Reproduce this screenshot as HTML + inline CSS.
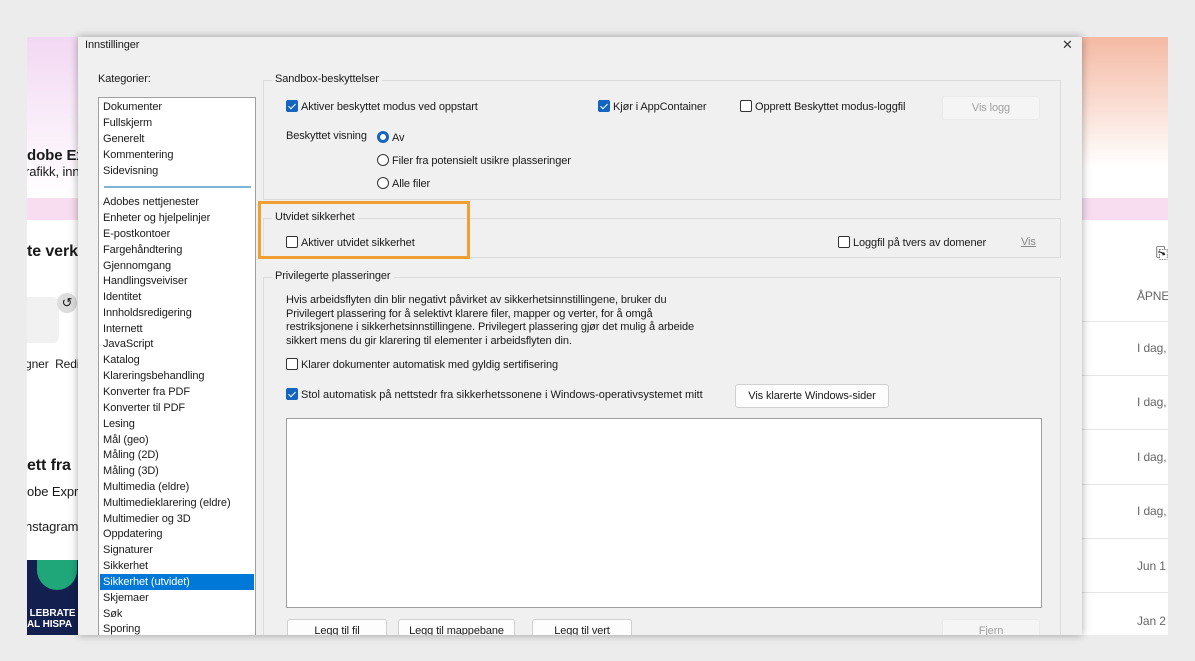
<!DOCTYPE html>
<html><head><meta charset="utf-8"><style>
*{margin:0;padding:0;box-sizing:border-box}
body{width:1195px;height:661px;background:#ececec;position:relative;overflow:hidden;font-family:"Liberation Sans",sans-serif;font-size:11px;letter-spacing:-0.1px;color:#1a1a1a}
.a{position:absolute;white-space:nowrap}
.bg{left:27px;top:37px;width:1141px;height:598px;background:#fff;overflow:hidden}
.dlg{left:78px;top:37px;width:1004px;height:598px;background:#f0f0f0;box-shadow:0 0 8px rgba(0,0,0,.35);overflow:hidden}
.grp{position:absolute;border:1px solid #dcdcdc}
.gt{position:absolute;background:#f0f0f0;padding:0 3px;top:-8px;left:8px}
.cb{display:inline-block;width:12px;height:12px;border:1px solid #333;border-radius:2px;vertical-align:-2px;margin-right:3px;background:#fff}
.cb.on{background:#1565c0;border-color:#1565c0;position:relative}
.cb.on:after{content:"";position:absolute;left:3px;top:1px;width:3px;height:6px;border:solid #fff;border-width:0 1.5px 1.5px 0;transform:rotate(45deg)}
.rb{display:inline-block;width:12px;height:12px;border:1px solid #333;border-radius:50%;vertical-align:-2px;margin-right:3px;background:#fff}
.rb.on{border:3.5px solid #1565c0}
.btn{position:absolute;background:#fdfdfd;border:1px solid #d0d0d0;border-radius:3px;text-align:center;line-height:22px}
.dis{color:#a0a0a0;background:#f5f5f5;border-color:#eaeaea}
.li{position:absolute;left:4px;height:16px;line-height:16px}
</style></head><body>
<div class="a bg">
 <div class="a" style="left:0;top:0;width:60px;height:160px;background:linear-gradient(#f3d8f3,#fff)"></div>
 <div class="a" style="left:1055px;top:0;width:86px;height:130px;background:linear-gradient(#f4b9a3,#fff)"></div>
 <div class="a" style="left:0;top:161px;width:1141px;height:22px;background:#f7ddef"></div>
 <div class="a" style="left:0;top:110px;font-size:15px;font-weight:bold">dobe Ex</div>
 <div class="a" style="left:-2px;top:127px;font-size:13px">rafikk, inn</div>
 <div class="a" style="left:0;top:206px;font-size:16px;font-weight:bold">te verk</div>
 <div class="a" style="left:-10px;top:260px;width:42px;height:46px;background:#f1f1f1;border-radius:6px"></div>
 <div class="a" style="left:30px;top:256px;width:20px;height:20px;border-radius:50%;background:#ddd;text-align:center;line-height:20px;font-size:13px">↺</div>
 <div class="a" style="left:-2px;top:320px;font-size:12px">gner &nbsp;Redig</div>
 <div class="a" style="left:0;top:420px;font-size:16px;font-weight:bold">ett fra</div>
 <div class="a" style="left:0;top:447px;font-size:13px">obe Expre</div>
 <div class="a" style="left:-2px;top:482px;font-size:13px">nstagram</div>
 <div class="a" style="left:0;top:523px;width:52px;height:75px;background:#13204f;color:#fff;font-weight:bold;font-size:10px;padding-top:48px;line-height:11px">&nbsp;LEBRATE<br>AL HISPA</div>
 <div class="a" style="left:10px;top:523px;width:40px;height:30px;background:#1fa77a;border-radius:0 0 20px 20px"></div>
 <div class="a" style="left:1129px;top:208px;font-size:15px">⎘</div>
 <div class="a" style="left:1110px;top:252px;color:#666;font-size:12px">ÅPNE</div>
 <div class="a" style="left:1055px;top:284px;width:86px;border-top:1px solid #e5e5e5"></div>
 <div class="a" style="left:1110px;top:304px;color:#666;font-size:12px">I dag,</div>
 <div class="a" style="left:1055px;top:338px;width:86px;border-top:1px solid #e5e5e5"></div>
 <div class="a" style="left:1110px;top:358px;color:#666;font-size:12px">I dag,</div>
 <div class="a" style="left:1055px;top:392px;width:86px;border-top:1px solid #e5e5e5"></div>
 <div class="a" style="left:1110px;top:413px;color:#666;font-size:12px">I dag,</div>
 <div class="a" style="left:1055px;top:447px;width:86px;border-top:1px solid #e5e5e5"></div>
 <div class="a" style="left:1110px;top:467px;color:#666;font-size:12px">I dag,</div>
 <div class="a" style="left:1055px;top:501px;width:86px;border-top:1px solid #e5e5e5"></div>
 <div class="a" style="left:1110px;top:522px;color:#666;font-size:12px">Jun 1</div>
 <div class="a" style="left:1055px;top:555px;width:86px;border-top:1px solid #e5e5e5"></div>
 <div class="a" style="left:1110px;top:577px;color:#666;font-size:12px">Jan 2</div>
</div>
<div class="a dlg">
 <div class="a" style="left:7px;top:2px;font-size:11px">Innstillinger</div>
 <div class="a" style="left:984px;top:0px;font-size:13px;color:#333">✕</div>
 <div class="a" style="left:20px;top:36px;font-size:11px">Kategorier:</div>
 <div class="a" style="left:20px;top:60px;width:158px;height:560px;background:#fff;border:1px solid #a0a0a0">
  <div class="li" style="top:1px">Dokumenter</div>
  <div class="li" style="top:17px">Fullskjerm</div>
  <div class="li" style="top:33px">Generelt</div>
  <div class="li" style="top:49px">Kommentering</div>
  <div class="li" style="top:65px">Sidevisning</div>
  <div class="a" style="left:5px;top:88px;width:147px;border-top:2px solid #7fb4d9"></div>
  <div class="li" style="top:96px">Adobes nettjenester</div>
  <div class="li" style="top:112px">Enheter og hjelpelinjer</div>
  <div class="li" style="top:128px">E-postkontoer</div>
  <div class="li" style="top:144px">Fargehåndtering</div>
  <div class="li" style="top:160px">Gjennomgang</div>
  <div class="li" style="top:175px">Handlingsveiviser</div>
  <div class="li" style="top:191px">Identitet</div>
  <div class="li" style="top:207px">Innholdsredigering</div>
  <div class="li" style="top:223px">Internett</div>
  <div class="li" style="top:238px">JavaScript</div>
  <div class="li" style="top:254px">Katalog</div>
  <div class="li" style="top:270px">Klareringsbehandling</div>
  <div class="li" style="top:286px">Konverter fra PDF</div>
  <div class="li" style="top:302px">Konverter til PDF</div>
  <div class="li" style="top:318px">Lesing</div>
  <div class="li" style="top:334px">Mål (geo)</div>
  <div class="li" style="top:349px">Måling (2D)</div>
  <div class="li" style="top:365px">Måling (3D)</div>
  <div class="li" style="top:381px">Multimedia (eldre)</div>
  <div class="li" style="top:397px">Multimedieklarering (eldre)</div>
  <div class="li" style="top:413px">Multimedier og 3D</div>
  <div class="li" style="top:428px">Oppdatering</div>
  <div class="li" style="top:444px">Signaturer</div>
  <div class="li" style="top:460px">Sikkerhet</div>
  <div class="a" style="left:1px;top:476px;width:154px;height:16px;background:#0078d7"></div>
  <div class="li" style="top:476px;color:#fff">Sikkerhet (utvidet)</div>
  <div class="li" style="top:492px">Skjemaer</div>
  <div class="li" style="top:508px">Søk</div>
  <div class="li" style="top:523px">Sporing</div>
 </div>
 <div class="grp" style="left:185px;top:43px;width:798px;height:120px"><div class="gt" style="font-size:11px">Sandbox-beskyttelser</div></div>
 <div class="a" style="left:208px;top:63px"><span class="cb on"></span>Aktiver beskyttet modus ved oppstart</div>
 <div class="a" style="left:520px;top:63px"><span class="cb on"></span>Kjør i AppContainer</div>
 <div class="a" style="left:662px;top:63px"><span class="cb"></span>Opprett Beskyttet modus-loggfil</div>
 <div class="btn dis" style="left:864px;top:59px;width:98px">Vis logg</div>
 <div class="a" style="left:208px;top:93px">Beskyttet visning</div>
 <div class="a" style="left:299px;top:94px"><span class="rb on"></span>Av</div>
 <div class="a" style="left:299px;top:117px"><span class="rb"></span>Filer fra potensielt usikre plasseringer</div>
 <div class="a" style="left:299px;top:140px"><span class="rb"></span>Alle filer</div>
 <div class="grp" style="left:185px;top:181px;width:798px;height:40px"><div class="gt" style="font-size:11px">Utvidet sikkerhet</div></div>
 <div class="a" style="left:208px;top:199px"><span class="cb"></span>Aktiver utvidet sikkerhet</div>
 <div class="a" style="left:760px;top:199px"><span class="cb"></span>Loggfil på tvers av domener</div>
 <div class="a" style="left:943px;top:199px;color:#888;text-decoration:underline">Vis</div>
 <div class="a" style="left:180px;top:164px;width:212px;height:58px;border:3px solid #f0a030"></div>
 <div class="grp" style="left:185px;top:240px;width:798px;height:380px"><div class="gt" style="font-size:11px">Privilegerte plasseringer</div></div>
 <div class="a" style="left:208px;top:257px;line-height:13.5px;font-size:11px">Hvis arbeidsflyten din blir negativt påvirket av sikkerhetsinnstillingene, bruker du<br>Privilegert plassering for å selektivt klarere filer, mapper og verter, for å omgå<br>restriksjonene i sikkerhetsinnstillingene. Privilegert plassering gjør det mulig å arbeide<br>sikkert mens du gir klarering til elementer i arbeidsflyten din.</div>
 <div class="a" style="left:208px;top:321px"><span class="cb"></span>Klarer dokumenter automatisk med gyldig sertifisering</div>
 <div class="a" style="left:208px;top:351px;letter-spacing:0"><span class="cb on"></span>Stol automatisk på nettstedr fra sikkerhetssonene i Windows-operativsystemet mitt</div>
 <div class="btn" style="left:657px;top:347px;width:154px">Vis klarerte Windows-sider</div>
 <div class="a" style="left:208px;top:381px;width:756px;height:190px;background:#fff;border:1px solid #a0a0a0"></div>
 <div class="btn" style="left:209px;top:582px;width:100px">Legg til fil</div>
 <div class="btn" style="left:320px;top:582px;width:117px">Legg til mappebane</div>
 <div class="btn" style="left:454px;top:582px;width:100px">Legg til vert</div>
 <div class="btn dis" style="left:864px;top:582px;width:98px">Fjern</div>
</div>
</body></html>
